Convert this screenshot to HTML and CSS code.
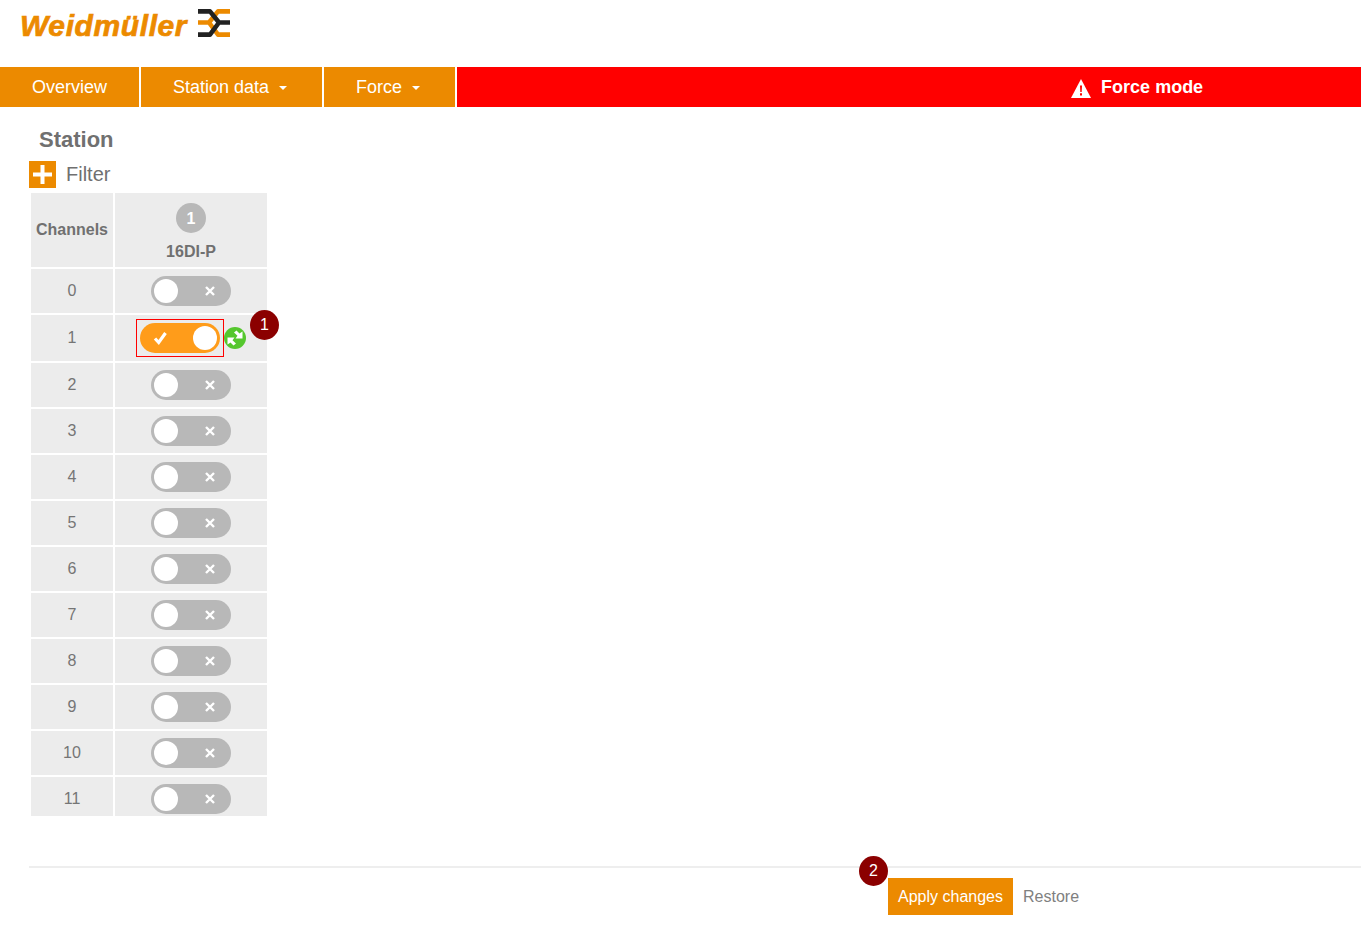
FILE: index.html
```html
<!DOCTYPE html>
<html lang="en">
<head>
<meta charset="utf-8">
<title>Weidmüller – Force mode</title>
<link rel="stylesheet" href="styles.css">
</head>
<body>
<header class="brand">
  <span class="brand-name">Weidmüller</span>
  <svg class="brand-mark" viewBox="0 0 32 28" width="32" height="28" aria-hidden="true">
    <g fill="none" stroke-width="4.6" stroke-linejoin="round">
      <path stroke="#ec8a00" d="M32 2.4H20L11 13.5H0M32 25.6H20L11 13.5"/>
      <path stroke="#222" d="M0 2.4H12L21 13.5H32M0 25.6H12L21 13.5"/>
    </g>
  </svg>
</header>
<nav class="nav">
  <a class="nav-item">Overview</a>
  <a class="nav-item has-caret">Station data<span class="caret"></span></a>
  <a class="nav-item has-caret">Force<span class="caret"></span></a>
  <div class="nav-alert">
    <svg viewBox="0 0 20 19" width="20" height="19" aria-hidden="true">
      <path fill="#fff" d="M10 0L20 19H0Z"/>
      <path fill="#f00" d="M9 6.5h2l-.3 6.5H9.3ZM9 14.3h2v2.2H9Z"/>
    </svg>
    <span>Force mode</span>
  </div>
</nav>
<main class="content">
  <h1 class="title">Station</h1>
  <div class="filter">
    <span class="filter-btn"><svg viewBox="0 0 27 27" width="27" height="27" aria-hidden="true"><path fill="#fff" d="M11.5 4h4v7.5H23v4h-7.5V23h-4v-7.5H4v-4h7.5Z"/></svg></span>
    <span class="filter-label">Filter</span>
  </div>
  <table class="grid">
    <thead>
      <tr>
        <th class="col-channel head-cell">Channels</th>
        <th class="col-module head-module"><span class="module-no">1</span><span class="module-name">16DI-P</span></th>
      </tr>
    </thead>
    <tbody>
      <tr><td class="col-channel">0</td><td class="col-module"><span class="toggle"><span class="knob"></span><svg class="x" viewBox="0 0 12 12" width="12" height="12"><path d="M2 2l8 8M10 2l-8 8"/></svg></span></td></tr>
      <tr class="row-changed"><td class="col-channel">1</td><td class="col-module">
        <div class="changed">
          <span class="changed-box"><span class="toggle on"><svg class="check" viewBox="0 0 16 16" width="16" height="16"><path d="M2 8.5l3.7 4L12.5 3"/></svg><span class="knob"></span></span></span>
          <svg class="sync" viewBox="0 0 22 22" width="22" height="22" aria-hidden="true">
            <circle cx="11" cy="11" r="11" fill="#55c72e"/>
            <path fill="#fff" d="M10 5.5L12.5 3.5L15.5 6.5L18.5 4.5V11.5H11.5L13.5 8.8ZM12 16.5L9.5 18.5L6.5 15.5L3.5 17.5V10.5H10.5L8.5 13.2Z"/>
          </svg>
          <span class="step step-one">1</span>
        </div>
      </td></tr>
      <tr><td class="col-channel">2</td><td class="col-module"><span class="toggle"><span class="knob"></span><svg class="x" viewBox="0 0 12 12" width="12" height="12"><path d="M2 2l8 8M10 2l-8 8"/></svg></span></td></tr>
      <tr><td class="col-channel">3</td><td class="col-module"><span class="toggle"><span class="knob"></span><svg class="x" viewBox="0 0 12 12" width="12" height="12"><path d="M2 2l8 8M10 2l-8 8"/></svg></span></td></tr>
      <tr><td class="col-channel">4</td><td class="col-module"><span class="toggle"><span class="knob"></span><svg class="x" viewBox="0 0 12 12" width="12" height="12"><path d="M2 2l8 8M10 2l-8 8"/></svg></span></td></tr>
      <tr><td class="col-channel">5</td><td class="col-module"><span class="toggle"><span class="knob"></span><svg class="x" viewBox="0 0 12 12" width="12" height="12"><path d="M2 2l8 8M10 2l-8 8"/></svg></span></td></tr>
      <tr><td class="col-channel">6</td><td class="col-module"><span class="toggle"><span class="knob"></span><svg class="x" viewBox="0 0 12 12" width="12" height="12"><path d="M2 2l8 8M10 2l-8 8"/></svg></span></td></tr>
      <tr><td class="col-channel">7</td><td class="col-module"><span class="toggle"><span class="knob"></span><svg class="x" viewBox="0 0 12 12" width="12" height="12"><path d="M2 2l8 8M10 2l-8 8"/></svg></span></td></tr>
      <tr><td class="col-channel">8</td><td class="col-module"><span class="toggle"><span class="knob"></span><svg class="x" viewBox="0 0 12 12" width="12" height="12"><path d="M2 2l8 8M10 2l-8 8"/></svg></span></td></tr>
      <tr><td class="col-channel">9</td><td class="col-module"><span class="toggle"><span class="knob"></span><svg class="x" viewBox="0 0 12 12" width="12" height="12"><path d="M2 2l8 8M10 2l-8 8"/></svg></span></td></tr>
      <tr><td class="col-channel">10</td><td class="col-module"><span class="toggle"><span class="knob"></span><svg class="x" viewBox="0 0 12 12" width="12" height="12"><path d="M2 2l8 8M10 2l-8 8"/></svg></span></td></tr>
      <tr class="row-last"><td class="col-channel">11</td><td class="col-module"><span class="toggle"><span class="knob"></span><svg class="x" viewBox="0 0 12 12" width="12" height="12"><path d="M2 2l8 8M10 2l-8 8"/></svg></span></td></tr>
    </tbody>
  </table>
  <footer class="actions">
    <button class="apply" type="button"><span class="step step-two">2</span>Apply changes</button>
    <button class="restore" type="button">Restore</button>
  </footer>
</main>
</body>
</html>
```
FILE: styles.css
```css
* { box-sizing: border-box; }
html, body { margin: 0; padding: 0; background: #fff; }
body { font-family: "Liberation Sans", Arial, sans-serif; font-size: 16px; color: #757575; height: 934px; overflow: hidden; }

.brand { height: 67px; padding: 9px 0 0 20px; display: flex; align-items: flex-start; gap: 10px; }
.brand-name { font-size: 30px; line-height: 34px; font-weight: 700; font-style: italic; color: #ec8a00; -webkit-text-stroke: 0.7px #ec8a00; letter-spacing: 0.6px; width: 168px; white-space: nowrap; }
.brand-mark { display: block; flex: none; }

.nav { display: flex; gap: 2px; height: 40px; }
.nav-item { display: flex; align-items: center; padding: 0 32px; background: #ec8a00; color: #fff; font-size: 18px; white-space: nowrap; }
.has-caret { padding-right: 35px; }
.caret { width: 0; height: 0; margin: 2px 0 0 10px; border-left: 4px solid transparent; border-right: 4px solid transparent; border-top: 4px solid #fff; }
.nav-alert { flex: 1; display: flex; align-items: center; gap: 10px; padding-left: 614px; background: #f00; color: #fff; font-size: 18px; font-weight: 700; }
.nav-alert svg { display: block; margin-top: 3px; }

.content { padding-left: 29px; }
.title { margin: 0; padding: 20px 0 0 10px; font-size: 22px; line-height: 25px; font-weight: 700; color: #707070; }
.filter { display: flex; align-items: center; gap: 10px; margin-top: 9px; height: 27px; }
.filter-btn { display: block; width: 27px; height: 27px; background: #ec8a00; }
.filter-btn svg { display: block; }
.filter-label { font-size: 20px; color: #707070; }

.grid { border-collapse: separate; border-spacing: 2px; margin-top: 3px; table-layout: fixed; width: 240px; }
.grid th, .grid td { background: #ececec; padding: 0; text-align: center; font-size: 16px; vertical-align: middle; height: 44px; }
.grid th { height: 74px; font-weight: 700; color: #707070; }
.col-channel { width: 82px; }
.col-module { width: 152px; }
.grid th.head-module { vertical-align: top; padding-top: 10px; }
.module-no { display: block; width: 30px; height: 30px; margin: 0 auto; padding-top: 1px; border-radius: 50%; background: #b8b8b8; color: #fff; line-height: 30px; }
.module-name { display: block; margin-top: 10px; line-height: 18px; }

.grid .row-changed td { height: 46px; }
.grid .row-last td { height: 39px; }
.grid .row-last td.col-channel { padding-top: 4px; }
.grid .row-last td.col-module { padding-top: 5px; }

.toggle { position: relative; display: block; width: 80px; height: 30px; margin: 0 auto; border-radius: 15px; background: #b8b8b8; }
.knob { position: absolute; left: 3px; top: 3px; width: 24px; height: 24px; border-radius: 50%; background: #fff; }
.x { position: absolute; left: 53px; top: 9px; }
.x path { fill: none; stroke: #fff; stroke-width: 2.4; }

.changed { position: relative; display: flex; justify-content: center; align-items: center; }
.changed-box { display: block; width: 88px; height: 38px; padding: 3px; border: 1px solid #f00; }
.toggle.on { background: #ff9c1a; }
.toggle.on .knob { left: 53px; }
.check { position: absolute; left: 13px; top: 7px; }
.check path { fill: none; stroke: #fff; stroke-width: 3.2; }
.sync { display: block; flex: none; }

.step { position: absolute; width: 29px; height: 30px; border-radius: 50%; background: #8b0000; color: #fff; font-size: 16px; font-weight: 400; line-height: 30px; text-align: center; }
.step-one { left: 135px; top: -9px; }
.step-two { left: -29px; top: -22px; }

.actions { display: flex; margin-top: 48px; padding: 10px 0 0 859px; border-top: 2px solid #eee; }
.apply, .restore { font: 16px "Liberation Sans", Arial, sans-serif; border: 0; height: 37px; padding: 0 10px; cursor: pointer; }
.apply { position: relative; width: 125px; background: #ec8a00; color: #fff; }
.restore { background: none; color: #808080; }
```
